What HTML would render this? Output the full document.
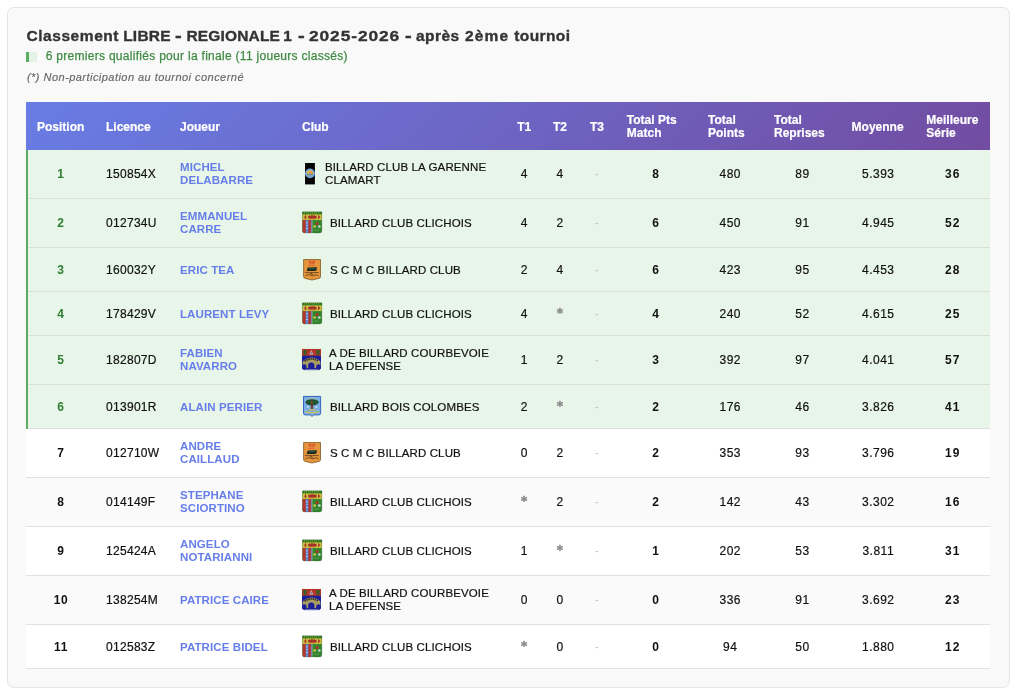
<!DOCTYPE html>
<html lang="fr">
<head>
<meta charset="utf-8">
<title>Classement LIBRE</title>
<style>
html,body{margin:0;padding:0;background:#fff;}
body{width:1024px;height:695px;overflow:hidden;font-family:"Liberation Sans",Arial,sans-serif;color:#111;}
.card{position:absolute;left:7px;top:7px;width:1001px;height:679px;border:1px solid #e5e5e6;border-radius:7px;background:#f9f9fa;box-sizing:content-box;}
h2,.sub,.note,table{will-change:transform;}
h2{position:absolute;left:26px;top:26px;margin:0;font-size:15.5px;line-height:20px;font-weight:bold;color:#333;white-space:nowrap;width:560px;height:20px;}
h2 span{position:absolute;top:0;}
h2 span.dash{transform:translateY(-0.7px) scale(1.3,1.1);transform-origin:0 50%;}
h2{-webkit-text-stroke:0.35px #333;}
.sub{position:absolute;left:26px;top:49px;font-size:12px;line-height:15px;color:#3f8a42;white-space:nowrap;letter-spacing:0.29px;-webkit-text-stroke:0.25px #3f8a42;}
  .sw{position:absolute;left:0;top:2.8px;width:8px;height:10px;background:#e4f1e5;border-left:3px solid #5aae5d;}
.sub span{position:absolute;left:19.7px;top:0;}
.note{position:absolute;left:26.7px;top:70px;font-size:11px;line-height:14px;font-style:italic;color:#666;white-space:nowrap;letter-spacing:0.46px;-webkit-text-stroke:0.15px #666;}
table{position:absolute;left:26px;top:102px;width:964px;border-collapse:separate;border-spacing:0;table-layout:fixed;font-size:12px;}
thead tr{height:48px;background:linear-gradient(135deg,#687de5 0%,#724ca1 100%);}
th{-webkit-text-stroke:0.2px #fff;color:#fff;font-weight:bold;font-size:12px;line-height:13px;text-align:left;padding:2px 10px 0;vertical-align:middle;}
td{padding:0 10px 0;vertical-align:middle;line-height:13px;font-size:11.5px;border-bottom:1px solid #e1e1e2;background:#fff;white-space:nowrap;}
tr.d{height:49px;}
tr.s{height:44px;}
tr.s td{padding-top:1px;}
tr.s td.a{padding-top:0;}
tr.s4{height:44px;}
tr.z td{background:#fafafa;}
tr.q td{background:#e8f5e9;border-bottom-color:#dcdedd;}
tr.q td:first-child{color:#2e7d32;}
.strip{position:absolute;left:26px;top:150px;width:3px;height:279px;background:linear-gradient(to right,#5dab60 0,#5dab60 2.2px,rgba(93,171,96,0) 2.3px);}
td.c,th.c{text-align:center;}
td.c,td.b,td.pos{letter-spacing:0.5px;font-size:12px;}
td.lic{letter-spacing:0.3px;font-size:12px;}
td.lic,td.c,td.club{-webkit-text-stroke:0.2px #111;}
td.g{-webkit-text-stroke:0;}
td.a{-webkit-text-stroke:0.5px #8c8c8c;}
td.club{letter-spacing:0.12px;}
.cl span{position:relative;top:0;}
.cl span.two{top:0.4px;}
.cl svg{position:relative;top:-1px;filter:blur(0.35px);}
td.n{font-size:11.5px;letter-spacing:0.1px;}
td.pos{letter-spacing:0.7px;font-size:12px;}
td.b{letter-spacing:1.1px;}
td.pos{font-weight:bold;text-align:center;}
td.b{font-weight:bold;text-align:center;}
td.n{font-weight:bold;color:#667eea;white-space:normal;}
td.club{white-space:normal;}
.cl{display:flex;align-items:center;}
.cl svg{flex:none;display:block;overflow:visible;}
.g{color:#c8c8c8;}
td.a{color:#8c8c8c;font-family:"DejaVu Sans","Liberation Sans",sans-serif;font-weight:bold;font-size:12px;letter-spacing:0;padding:0 10px 1px;}
</style>
</head>
<body>
<div class="card"></div>
<h2><span style="left:0.4px;letter-spacing:0.57px">Classement</span> <span style="left:97.2px;letter-spacing:0.21px">LIBRE</span> <span class="dash" style="left:148.8px">-</span> <span style="left:160.5px;letter-spacing:0.16px">REGIONALE</span> <span style="left:257.2px;letter-spacing:0px">1</span> <span class="dash" style="left:272.2px">-</span> <span style="left:282.7px;letter-spacing:0.8px;transform:scaleX(1.12);transform-origin:0 50%">2025-2026</span> <span class="dash" style="left:379.2px">-</span> <span style="left:389.9px;letter-spacing:0.46px">après</span> <span style="left:439.0px;letter-spacing:1.16px">2ème</span> <span style="left:488.3px;letter-spacing:0.39px">tournoi</span></h2>
<div class="sub"><i class="sw"></i><span>6 premiers qualifiés pour la finale (11 joueurs classés)</span></div>
<div class="note">(*) Non-participation au tournoi concerné</div>
<table>
<colgroup><col style="width:70px"><col style="width:74px"><col style="width:122px"><col style="width:214.5px"><col style="width:35.5px"><col style="width:36px"><col style="width:38px"><col style="width:80.5px"><col style="width:67.5px"><col style="width:77px"><col style="width:74.5px"><col style="width:74.5px"></colgroup>
<thead><tr><th style="padding-left:11px">Position</th><th>Licence</th><th>Joueur</th><th>Club</th><th class="c">T1</th><th class="c">T2</th><th class="c">T3</th><th style="padding-left:10.8px">Total Pts<br>Match</th><th style="padding-left:11.5px">Total<br>Points</th><th>Total<br>Reprises</th><th style="padding-left:10.6px">Moyenne</th><th style="padding-left:10.8px">Meilleure<br>Série</th></tr></thead>
<tbody>
<tr class="q d"><td class="pos">1</td><td class="lic">150854X</td><td class="n">MICHEL<br>DELABARRE</td><td class="club"><div class="cl"><svg class="lg" width="15" height="22" viewBox="0 0 15 22" style="margin-right:8px"><g transform="translate(0,0.8)"><rect x="3.05" y="0.2" width="9.85" height="21.4" fill="#040404"/><circle cx="8" cy="10.6" r="4.9" fill="#6fa8e4"/><circle cx="8" cy="10.7" r="3.7" fill="#8aa9bf"/><path d="M4.8 10.9 Q5 7.4 8 7.4 Q11 7.4 11.2 10.9 Z" fill="#e9b244"/><path d="M8.1 10.9 L9.6 8.4 L11.1 10.9 Z" fill="#ec8a3c"/><path d="M6.9 10.9 L7.6 8.6 L8.3 10.9 Z" fill="#8a8a86"/><rect x="5" y="11.4" width="6" height="0.9" fill="#5f9484"/><path d="M5.2 12.8 Q8 15.4 10.8 12.8 Z" fill="#7f9fc4"/></g></svg><span class="two">BILLARD CLUB LA GARENNE<br>CLAMART</span></div></td><td class="c">4</td><td class="c">4</td><td class="c g">-</td><td class="b">8</td><td class="c">480</td><td class="c">89</td><td class="c">5.393</td><td class="b">36</td></tr>
<tr class="q d"><td class="pos">2</td><td class="lic">012734U</td><td class="n">EMMANUEL<br>CARRE</td><td class="club"><div class="cl"><svg class="lg" width="20" height="22" viewBox="0 0 20 22" style="margin-right:8px"><defs><clipPath id="c2_0"><path d="M0.5 0.6 H19.9 V19.8 Q19.9 21.8 17.9 21.8 H2.5 Q0.5 21.8 0.5 19.8 Z"/></clipPath></defs><g transform="translate(0,0.2)"><g clip-path="url(#c2_0)"><rect x="0" y="0" width="20" height="22" fill="#2f8530"/><rect x="0" y="0" width="20" height="3.2" fill="#2c7a24"/><rect x="0" y="3.2" width="20" height="5.7" fill="#cbbf3f"/><rect x="0" y="8.9" width="10" height="13" fill="#b4372a"/><rect x="3.7" y="8.9" width="2.6" height="13" fill="#5d8bd2"/><rect x="8.9" y="8.9" width="0.9" height="13" fill="#5a7fc0"/><rect x="9.8" y="8.9" width="0.5" height="13" fill="#d8d8c8"/><circle cx="5" cy="11.6" r="0.6" fill="#eef"/><circle cx="5" cy="14.4" r="0.5" fill="#dde"/><circle cx="5" cy="17.2" r="0.6" fill="#eef"/><path d="M2 1.6 H18" stroke="#b9b43c" stroke-width="0.8" stroke-dasharray="1 1"/><ellipse cx="10.4" cy="5.6" rx="4.4" ry="1.5" fill="#a8302a"/><path d="M6 6.9 Q10.4 8.6 14.8 6.9" fill="none" stroke="#a8302a" stroke-width="0.7"/><path d="M1.8 6.4 L3.9 4 L4.6 7.4 Z M15.9 7.4 L16.6 4 L18.6 6.4 Z" fill="#a8302a"/><rect x="3.4" y="3.6" width="0.6" height="4.6" fill="#a8302a"/><rect x="16.4" y="3.6" width="0.6" height="4.6" fill="#a8302a"/><circle cx="15.2" cy="12.2" r="1.5" fill="#bf2f2a"/><circle cx="12.7" cy="15.3" r="1.35" fill="#d3c83e"/><circle cx="17.3" cy="15.3" r="1.35" fill="#cfd3cf"/><rect x="12.2" y="18.3" width="4.6" height="1.2" fill="#5a9a48"/></g><path d="M0.5 0.6 H19.9 V19.8 Q19.9 21.8 17.9 21.8 H2.5 Q0.5 21.8 0.5 19.8 Z" fill="none" stroke="#3b4a30" stroke-opacity="0.45" stroke-width="0.5"/></g></svg><span>BILLARD CLUB CLICHOIS</span></div></td><td class="c">4</td><td class="c">2</td><td class="c g">-</td><td class="b">6</td><td class="c">450</td><td class="c">91</td><td class="c">4.945</td><td class="b">52</td></tr>
<tr class="q s"><td class="pos">3</td><td class="lic">160032Y</td><td class="n">ERIC TEA</td><td class="club"><div class="cl"><svg class="lg" width="20" height="22" viewBox="0 0 20 22" style="margin-right:8px"><g transform="translate(0,0.6)"><path d="M1.6 0.9 H18.5 V18.2 Q18.5 19.4 17 19.8 L10 21.4 L3.1 19.8 Q1.6 19.4 1.6 18.2 Z" fill="#e5953b" stroke="#7d5a26" stroke-width="0.8"/><path d="M7 2.2 L7.8 4.6 H12 L12.8 2.2 L11.2 3.6 L9.9 2.1 L8.6 3.6 Z" fill="none" stroke="#d23c2c" stroke-width="0.8" stroke-linejoin="round"/><rect x="6.4" y="6" width="6.4" height="1.5" fill="#df7038"/><path d="M4.7 12.4 L5.8 8.9 L14.9 8.6 L14.7 11 L13.3 12.4 Z" fill="#16261e"/><path d="M6.4 10.4 L13.6 10.1" stroke="#3f7a5a" stroke-width="0.7"/><path d="M3 14 H16.8" stroke="#6b4a1e" stroke-width="0.9"/><path d="M3.4 17.2 Q6 15.2 9 16.6 Q10 18 12 16.8 Q14 15.6 16.6 17.2" fill="none" stroke="#6b4a1e" stroke-width="0.9"/><path d="M8.4 15 Q10.6 14.6 10.4 16.4" fill="none" stroke="#4a3414" stroke-width="0.9"/></g></svg><span>S C M C BILLARD CLUB</span></div></td><td class="c">2</td><td class="c">4</td><td class="c g">-</td><td class="b">6</td><td class="c">423</td><td class="c">95</td><td class="c">4.453</td><td class="b">28</td></tr>
<tr class="q s"><td class="pos">4</td><td class="lic">178429V</td><td class="n">LAURENT LEVY</td><td class="club"><div class="cl"><svg class="lg" width="20" height="22" viewBox="0 0 20 22" style="margin-right:8px"><defs><clipPath id="c2_1"><path d="M0.5 0.6 H19.9 V19.8 Q19.9 21.8 17.9 21.8 H2.5 Q0.5 21.8 0.5 19.8 Z"/></clipPath></defs><g transform="translate(0,0.2)"><g clip-path="url(#c2_1)"><rect x="0" y="0" width="20" height="22" fill="#2f8530"/><rect x="0" y="0" width="20" height="3.2" fill="#2c7a24"/><rect x="0" y="3.2" width="20" height="5.7" fill="#cbbf3f"/><rect x="0" y="8.9" width="10" height="13" fill="#b4372a"/><rect x="3.7" y="8.9" width="2.6" height="13" fill="#5d8bd2"/><rect x="8.9" y="8.9" width="0.9" height="13" fill="#5a7fc0"/><rect x="9.8" y="8.9" width="0.5" height="13" fill="#d8d8c8"/><circle cx="5" cy="11.6" r="0.6" fill="#eef"/><circle cx="5" cy="14.4" r="0.5" fill="#dde"/><circle cx="5" cy="17.2" r="0.6" fill="#eef"/><path d="M2 1.6 H18" stroke="#b9b43c" stroke-width="0.8" stroke-dasharray="1 1"/><ellipse cx="10.4" cy="5.6" rx="4.4" ry="1.5" fill="#a8302a"/><path d="M6 6.9 Q10.4 8.6 14.8 6.9" fill="none" stroke="#a8302a" stroke-width="0.7"/><path d="M1.8 6.4 L3.9 4 L4.6 7.4 Z M15.9 7.4 L16.6 4 L18.6 6.4 Z" fill="#a8302a"/><rect x="3.4" y="3.6" width="0.6" height="4.6" fill="#a8302a"/><rect x="16.4" y="3.6" width="0.6" height="4.6" fill="#a8302a"/><circle cx="15.2" cy="12.2" r="1.5" fill="#bf2f2a"/><circle cx="12.7" cy="15.3" r="1.35" fill="#d3c83e"/><circle cx="17.3" cy="15.3" r="1.35" fill="#cfd3cf"/><rect x="12.2" y="18.3" width="4.6" height="1.2" fill="#5a9a48"/></g><path d="M0.5 0.6 H19.9 V19.8 Q19.9 21.8 17.9 21.8 H2.5 Q0.5 21.8 0.5 19.8 Z" fill="none" stroke="#3b4a30" stroke-opacity="0.45" stroke-width="0.5"/></g></svg><span>BILLARD CLUB CLICHOIS</span></div></td><td class="c">4</td><td class="c a">*</td><td class="c g">-</td><td class="b">4</td><td class="c">240</td><td class="c">52</td><td class="c">4.615</td><td class="b">25</td></tr>
<tr class="q d"><td class="pos">5</td><td class="lic">182807D</td><td class="n">FABIEN<br>NAVARRO</td><td class="club"><div class="cl"><svg class="lg" width="19" height="22" viewBox="0 0 19 22" style="margin-right:8px"><defs><clipPath id="c4_0"><path d="M0 0 H19 V18.4 Q19 21.5 15.6 21.5 H3.4 Q0 21.5 0 18.4 Z"/></clipPath></defs><g clip-path="url(#c4_0)" transform="translate(0,0.7)"><rect width="19" height="22" fill="#1b1f9a"/><rect width="19" height="7" fill="#b9382b"/><path d="M3 0.6 L5.2 2.8 L3.8 6.8 H2.4 L0.8 2.8 Z M16 0.6 L18.2 2.8 L16.6 6.8 H15.2 L13.8 2.8 Z" fill="#3a5a28"/><path d="M5.4 1 H7 V2.4 H5.4 Z M11.8 1 H13.4 V2.4 H11.8 Z" fill="#8a3024"/><path d="M9.3 1.6 L11.3 5.8 H7.3 Z" fill="#c9c9d0"/><circle cx="9.3" cy="4.3" r="1" fill="#7d7d86"/><path d="M0.7 19.6 V12.8 Q9.5 4.6 18.4 12.8 V19.6 Z" fill="#a89d63"/><path d="M2.6 12.4 Q9.5 7.8 16.4 12.4" fill="none" stroke="#2f2e2a" stroke-width="1.9" stroke-dasharray="1.4 0.7"/><path d="M6.2 19.8 V16.6 Q6.2 13.8 9.3 13.8 Q12.4 13.8 12.4 16.6 V19.8 Z" fill="#1b1f9a"/><path d="M0 19.8 V17.6 Q0.6 15.6 2.4 15.6 Q4.4 15.6 4.6 17.6 V19.8 Z M14.2 19.8 V17.6 Q14.4 15.6 16.4 15.6 Q18.4 15.6 19 17.6 V19.8 Z" fill="#1b1f9a"/><rect x="0" y="19.4" width="19" height="1" fill="#1b1f9a"/><rect x="3" y="20.3" width="13" height="0.7" fill="#9aa0b8"/></g></svg><span class="two">A DE BILLARD COURBEVOIE<br>LA DEFENSE</span></div></td><td class="c">1</td><td class="c">2</td><td class="c g">-</td><td class="b">3</td><td class="c">392</td><td class="c">97</td><td class="c">4.041</td><td class="b">57</td></tr>
<tr class="q s"><td class="pos">6</td><td class="lic">013901R</td><td class="n">ALAIN PERIER</td><td class="club"><div class="cl"><svg class="lg" width="20" height="22" viewBox="0 0 20 22" style="margin-right:8px"><g transform="translate(0,0.7)"><path d="M1.5 0.7 H18.6 V17.6 Q18.6 19.2 17 19.2 H11.6 L10 20.8 L8.5 19.2 H3.1 Q1.5 19.2 1.5 17.6 Z" fill="#7aaee8" stroke="#3a64c4" stroke-width="1"/><path d="M4.4 4 Q10 0.6 15.6 4" fill="none" stroke="#cfc65c" stroke-width="0.9" stroke-dasharray="1 0.7"/><ellipse cx="10.05" cy="6.6" rx="6.6" ry="3.1" fill="#1f562e"/><rect x="8.8" y="8.9" width="2.3" height="4.2" fill="#78392a"/><circle cx="9.8" cy="6.5" r="0.9" fill="#dd3030"/><ellipse cx="5.9" cy="11.3" rx="1.1" ry="0.7" fill="#e8eef8"/><ellipse cx="14.2" cy="11.3" rx="1.1" ry="0.7" fill="#e8eef8"/><rect x="6.2" y="13.7" width="7.7" height="1.3" fill="#c2b94c"/><path d="M2.9 15.9 Q10 18.6 17.2 15.9" fill="none" stroke="#cbc150" stroke-width="1.3"/></g></svg><span>BILLARD BOIS COLOMBES</span></div></td><td class="c">2</td><td class="c a">*</td><td class="c g">-</td><td class="b">2</td><td class="c">176</td><td class="c">46</td><td class="c">3.826</td><td class="b">41</td></tr>
<tr class="d"><td class="pos">7</td><td class="lic">012710W</td><td class="n">ANDRE<br>CAILLAUD</td><td class="club"><div class="cl"><svg class="lg" width="20" height="22" viewBox="0 0 20 22" style="margin-right:8px"><g transform="translate(0,0.6)"><path d="M1.6 0.9 H18.5 V18.2 Q18.5 19.4 17 19.8 L10 21.4 L3.1 19.8 Q1.6 19.4 1.6 18.2 Z" fill="#e5953b" stroke="#7d5a26" stroke-width="0.8"/><path d="M7 2.2 L7.8 4.6 H12 L12.8 2.2 L11.2 3.6 L9.9 2.1 L8.6 3.6 Z" fill="none" stroke="#d23c2c" stroke-width="0.8" stroke-linejoin="round"/><rect x="6.4" y="6" width="6.4" height="1.5" fill="#df7038"/><path d="M4.7 12.4 L5.8 8.9 L14.9 8.6 L14.7 11 L13.3 12.4 Z" fill="#16261e"/><path d="M6.4 10.4 L13.6 10.1" stroke="#3f7a5a" stroke-width="0.7"/><path d="M3 14 H16.8" stroke="#6b4a1e" stroke-width="0.9"/><path d="M3.4 17.2 Q6 15.2 9 16.6 Q10 18 12 16.8 Q14 15.6 16.6 17.2" fill="none" stroke="#6b4a1e" stroke-width="0.9"/><path d="M8.4 15 Q10.6 14.6 10.4 16.4" fill="none" stroke="#4a3414" stroke-width="0.9"/></g></svg><span>S C M C BILLARD CLUB</span></div></td><td class="c">0</td><td class="c">2</td><td class="c g">-</td><td class="b">2</td><td class="c">353</td><td class="c">93</td><td class="c">3.796</td><td class="b">19</td></tr>
<tr class="d z"><td class="pos">8</td><td class="lic">014149F</td><td class="n">STEPHANE<br>SCIORTINO</td><td class="club"><div class="cl"><svg class="lg" width="20" height="22" viewBox="0 0 20 22" style="margin-right:8px"><defs><clipPath id="c2_2"><path d="M0.5 0.6 H19.9 V19.8 Q19.9 21.8 17.9 21.8 H2.5 Q0.5 21.8 0.5 19.8 Z"/></clipPath></defs><g transform="translate(0,0.2)"><g clip-path="url(#c2_2)"><rect x="0" y="0" width="20" height="22" fill="#2f8530"/><rect x="0" y="0" width="20" height="3.2" fill="#2c7a24"/><rect x="0" y="3.2" width="20" height="5.7" fill="#cbbf3f"/><rect x="0" y="8.9" width="10" height="13" fill="#b4372a"/><rect x="3.7" y="8.9" width="2.6" height="13" fill="#5d8bd2"/><rect x="8.9" y="8.9" width="0.9" height="13" fill="#5a7fc0"/><rect x="9.8" y="8.9" width="0.5" height="13" fill="#d8d8c8"/><circle cx="5" cy="11.6" r="0.6" fill="#eef"/><circle cx="5" cy="14.4" r="0.5" fill="#dde"/><circle cx="5" cy="17.2" r="0.6" fill="#eef"/><path d="M2 1.6 H18" stroke="#b9b43c" stroke-width="0.8" stroke-dasharray="1 1"/><ellipse cx="10.4" cy="5.6" rx="4.4" ry="1.5" fill="#a8302a"/><path d="M6 6.9 Q10.4 8.6 14.8 6.9" fill="none" stroke="#a8302a" stroke-width="0.7"/><path d="M1.8 6.4 L3.9 4 L4.6 7.4 Z M15.9 7.4 L16.6 4 L18.6 6.4 Z" fill="#a8302a"/><rect x="3.4" y="3.6" width="0.6" height="4.6" fill="#a8302a"/><rect x="16.4" y="3.6" width="0.6" height="4.6" fill="#a8302a"/><circle cx="15.2" cy="12.2" r="1.5" fill="#bf2f2a"/><circle cx="12.7" cy="15.3" r="1.35" fill="#d3c83e"/><circle cx="17.3" cy="15.3" r="1.35" fill="#cfd3cf"/><rect x="12.2" y="18.3" width="4.6" height="1.2" fill="#5a9a48"/></g><path d="M0.5 0.6 H19.9 V19.8 Q19.9 21.8 17.9 21.8 H2.5 Q0.5 21.8 0.5 19.8 Z" fill="none" stroke="#3b4a30" stroke-opacity="0.45" stroke-width="0.5"/></g></svg><span>BILLARD CLUB CLICHOIS</span></div></td><td class="c a">*</td><td class="c">2</td><td class="c g">-</td><td class="b">2</td><td class="c">142</td><td class="c">43</td><td class="c">3.302</td><td class="b">16</td></tr>
<tr class="d"><td class="pos">9</td><td class="lic">125424A</td><td class="n">ANGELO<br>NOTARIANNI</td><td class="club"><div class="cl"><svg class="lg" width="20" height="22" viewBox="0 0 20 22" style="margin-right:8px"><defs><clipPath id="c2_3"><path d="M0.5 0.6 H19.9 V19.8 Q19.9 21.8 17.9 21.8 H2.5 Q0.5 21.8 0.5 19.8 Z"/></clipPath></defs><g transform="translate(0,0.2)"><g clip-path="url(#c2_3)"><rect x="0" y="0" width="20" height="22" fill="#2f8530"/><rect x="0" y="0" width="20" height="3.2" fill="#2c7a24"/><rect x="0" y="3.2" width="20" height="5.7" fill="#cbbf3f"/><rect x="0" y="8.9" width="10" height="13" fill="#b4372a"/><rect x="3.7" y="8.9" width="2.6" height="13" fill="#5d8bd2"/><rect x="8.9" y="8.9" width="0.9" height="13" fill="#5a7fc0"/><rect x="9.8" y="8.9" width="0.5" height="13" fill="#d8d8c8"/><circle cx="5" cy="11.6" r="0.6" fill="#eef"/><circle cx="5" cy="14.4" r="0.5" fill="#dde"/><circle cx="5" cy="17.2" r="0.6" fill="#eef"/><path d="M2 1.6 H18" stroke="#b9b43c" stroke-width="0.8" stroke-dasharray="1 1"/><ellipse cx="10.4" cy="5.6" rx="4.4" ry="1.5" fill="#a8302a"/><path d="M6 6.9 Q10.4 8.6 14.8 6.9" fill="none" stroke="#a8302a" stroke-width="0.7"/><path d="M1.8 6.4 L3.9 4 L4.6 7.4 Z M15.9 7.4 L16.6 4 L18.6 6.4 Z" fill="#a8302a"/><rect x="3.4" y="3.6" width="0.6" height="4.6" fill="#a8302a"/><rect x="16.4" y="3.6" width="0.6" height="4.6" fill="#a8302a"/><circle cx="15.2" cy="12.2" r="1.5" fill="#bf2f2a"/><circle cx="12.7" cy="15.3" r="1.35" fill="#d3c83e"/><circle cx="17.3" cy="15.3" r="1.35" fill="#cfd3cf"/><rect x="12.2" y="18.3" width="4.6" height="1.2" fill="#5a9a48"/></g><path d="M0.5 0.6 H19.9 V19.8 Q19.9 21.8 17.9 21.8 H2.5 Q0.5 21.8 0.5 19.8 Z" fill="none" stroke="#3b4a30" stroke-opacity="0.45" stroke-width="0.5"/></g></svg><span>BILLARD CLUB CLICHOIS</span></div></td><td class="c">1</td><td class="c a">*</td><td class="c g">-</td><td class="b">1</td><td class="c">202</td><td class="c">53</td><td class="c">3.811</td><td class="b">31</td></tr>
<tr class="d z"><td class="pos">10</td><td class="lic">138254M</td><td class="n">PATRICE CAIRE</td><td class="club"><div class="cl"><svg class="lg" width="19" height="22" viewBox="0 0 19 22" style="margin-right:8px"><defs><clipPath id="c4_1"><path d="M0 0 H19 V18.4 Q19 21.5 15.6 21.5 H3.4 Q0 21.5 0 18.4 Z"/></clipPath></defs><g clip-path="url(#c4_1)" transform="translate(0,0.7)"><rect width="19" height="22" fill="#1b1f9a"/><rect width="19" height="7" fill="#b9382b"/><path d="M3 0.6 L5.2 2.8 L3.8 6.8 H2.4 L0.8 2.8 Z M16 0.6 L18.2 2.8 L16.6 6.8 H15.2 L13.8 2.8 Z" fill="#3a5a28"/><path d="M5.4 1 H7 V2.4 H5.4 Z M11.8 1 H13.4 V2.4 H11.8 Z" fill="#8a3024"/><path d="M9.3 1.6 L11.3 5.8 H7.3 Z" fill="#c9c9d0"/><circle cx="9.3" cy="4.3" r="1" fill="#7d7d86"/><path d="M0.7 19.6 V12.8 Q9.5 4.6 18.4 12.8 V19.6 Z" fill="#a89d63"/><path d="M2.6 12.4 Q9.5 7.8 16.4 12.4" fill="none" stroke="#2f2e2a" stroke-width="1.9" stroke-dasharray="1.4 0.7"/><path d="M6.2 19.8 V16.6 Q6.2 13.8 9.3 13.8 Q12.4 13.8 12.4 16.6 V19.8 Z" fill="#1b1f9a"/><path d="M0 19.8 V17.6 Q0.6 15.6 2.4 15.6 Q4.4 15.6 4.6 17.6 V19.8 Z M14.2 19.8 V17.6 Q14.4 15.6 16.4 15.6 Q18.4 15.6 19 17.6 V19.8 Z" fill="#1b1f9a"/><rect x="0" y="19.4" width="19" height="1" fill="#1b1f9a"/><rect x="3" y="20.3" width="13" height="0.7" fill="#9aa0b8"/></g></svg><span class="two">A DE BILLARD COURBEVOIE<br>LA DEFENSE</span></div></td><td class="c">0</td><td class="c">0</td><td class="c g">-</td><td class="b">0</td><td class="c">336</td><td class="c">91</td><td class="c">3.692</td><td class="b">23</td></tr>
<tr class="s"><td class="pos">11</td><td class="lic">012583Z</td><td class="n">PATRICE BIDEL</td><td class="club"><div class="cl"><svg class="lg" width="20" height="22" viewBox="0 0 20 22" style="margin-right:8px"><defs><clipPath id="c2_4"><path d="M0.5 0.6 H19.9 V19.8 Q19.9 21.8 17.9 21.8 H2.5 Q0.5 21.8 0.5 19.8 Z"/></clipPath></defs><g transform="translate(0,0.2)"><g clip-path="url(#c2_4)"><rect x="0" y="0" width="20" height="22" fill="#2f8530"/><rect x="0" y="0" width="20" height="3.2" fill="#2c7a24"/><rect x="0" y="3.2" width="20" height="5.7" fill="#cbbf3f"/><rect x="0" y="8.9" width="10" height="13" fill="#b4372a"/><rect x="3.7" y="8.9" width="2.6" height="13" fill="#5d8bd2"/><rect x="8.9" y="8.9" width="0.9" height="13" fill="#5a7fc0"/><rect x="9.8" y="8.9" width="0.5" height="13" fill="#d8d8c8"/><circle cx="5" cy="11.6" r="0.6" fill="#eef"/><circle cx="5" cy="14.4" r="0.5" fill="#dde"/><circle cx="5" cy="17.2" r="0.6" fill="#eef"/><path d="M2 1.6 H18" stroke="#b9b43c" stroke-width="0.8" stroke-dasharray="1 1"/><ellipse cx="10.4" cy="5.6" rx="4.4" ry="1.5" fill="#a8302a"/><path d="M6 6.9 Q10.4 8.6 14.8 6.9" fill="none" stroke="#a8302a" stroke-width="0.7"/><path d="M1.8 6.4 L3.9 4 L4.6 7.4 Z M15.9 7.4 L16.6 4 L18.6 6.4 Z" fill="#a8302a"/><rect x="3.4" y="3.6" width="0.6" height="4.6" fill="#a8302a"/><rect x="16.4" y="3.6" width="0.6" height="4.6" fill="#a8302a"/><circle cx="15.2" cy="12.2" r="1.5" fill="#bf2f2a"/><circle cx="12.7" cy="15.3" r="1.35" fill="#d3c83e"/><circle cx="17.3" cy="15.3" r="1.35" fill="#cfd3cf"/><rect x="12.2" y="18.3" width="4.6" height="1.2" fill="#5a9a48"/></g><path d="M0.5 0.6 H19.9 V19.8 Q19.9 21.8 17.9 21.8 H2.5 Q0.5 21.8 0.5 19.8 Z" fill="none" stroke="#3b4a30" stroke-opacity="0.45" stroke-width="0.5"/></g></svg><span>BILLARD CLUB CLICHOIS</span></div></td><td class="c a">*</td><td class="c">0</td><td class="c g">-</td><td class="b">0</td><td class="c">94</td><td class="c">50</td><td class="c">1.880</td><td class="b">12</td></tr>
</tbody>
</table>
<div class="strip"></div>
</body>
</html>
